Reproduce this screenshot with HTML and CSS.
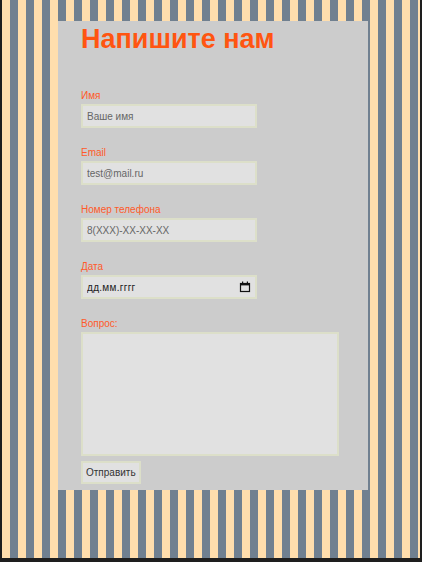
FILE: index.html
```html
<!DOCTYPE html>
<html lang="ru">
<head>
    <meta charset="UTF-8" />
    <meta name="viewport" content="width=device-width, initial-scale=1.0" />
    <title>Напишите нам</title>
    <link rel="stylesheet" href="styles.css">
</head>
<body>
    <div class="page">
        <!-- форма обратной связи -->
        <div class="feedback">
            <h1 class="title">Напишите нам</h1>
            <form id="contact_form" class="contact-form">
                <div class="field">
                    <label for="user_name">Имя</label>
                    <input type="text" id="user_name" name="user_name" placeholder="Ваше имя" />
                </div>
                <div class="field">
                    <label for="email">Email</label>
                    <input type="email" id="email" name="email" placeholder="test@mail.ru" />
                </div>
                <div class="field">
                    <label for="tel">Номер телефона</label>
                    <input type="tel" id="tel" name="tel" placeholder="8(XXX)-XX-XX-XX" />
                </div>
                <div class="field">
                    <label for="date">Дата</label>
                    <div class="date-box">
                        <input type="text" id="date" name="date" class="date-input" placeholder="дд.мм.гггг" />
                        <svg class="date-icon" width="12" height="12" viewBox="0 0 12 12">
                            <rect x="1.5" y="2.5" width="9" height="8" fill="none" stroke="#111" stroke-width="1.2" />
                            <rect x="1" y="2" width="10" height="2.4" fill="#111" />
                            <rect x="3" y="0.5" width="1.2" height="2" fill="#111" />
                            <rect x="7.8" y="0.5" width="1.2" height="2" fill="#111" />
                        </svg>
                    </div>
                </div>
                <div class="field field-last">
                    <label for="question">Вопрос:</label>
                    <textarea id="question" name="question"></textarea>
                </div>
                <button type="submit" class="btn">Отправить</button>
            </form>
        </div>
    </div>
</body>
</html>
```

FILE: styles.css
```css
* {
    box-sizing:border-box;
}
html, body {
    margin:0;
    padding:0;
    background:#1e1e1e;
}
body {
    font-family:"Liberation Sans", Arial, sans-serif;
}
.page {
    width:418px;
    height:558px;
    margin:0 2px;
    padding-top:21px;
    padding-left:56px;
    background:repeating-linear-gradient(90deg, #ffdead 0 8px, #708090 8px 16px);
}
.feedback {
    width:310px;
    height:469px;
    padding:0 23px;
    background:#cccccc;
}
.title {
    margin:0;
    padding-top:4px;
    font-size:27px;
    line-height:28px;
    font-weight:bold;
    color:#ff5511;
}
.contact-form {
    padding-top:36px;
}
.field {
    margin-bottom:18px;
}
.field-last {
    margin-bottom:5px;
}
.field label {
    display:block;
    height:14px;
    margin-bottom:1px;
    font-size:10px;
    line-height:14px;
    color:#ff5a2a;
}
.field input {
    display:block;
    width:176px;
    height:24px;
    padding:0 4px;
    border:2px solid #dcdfc9;
    background:#e1e1e1;
    font-family:"Liberation Sans", Arial, sans-serif;
    font-size:10px;
    color:#333;
    outline:none;
}
.field input::placeholder {
    color:#666;
}
.date-box {
    position:relative;
    width:176px;
}
.field .date-input {
    letter-spacing:0.3px;
}
.field .date-input::placeholder {
    color:#222;
}
.date-icon {
    position:absolute;
    top:6px;
    right:6px;
}
.field textarea {
    display:block;
    width:258px;
    height:124px;
    border:2px solid #dcdfc9;
    background:#e1e1e1;
    resize:none;
    outline:none;
}
.btn {
    display:block;
    height:23px;
    padding:0 3px;
    border:2px solid #dcdfc9;
    background:#e1e1e1;
    font-family:"Liberation Sans", Arial, sans-serif;
    font-size:10px;
    color:#333;
}
```
